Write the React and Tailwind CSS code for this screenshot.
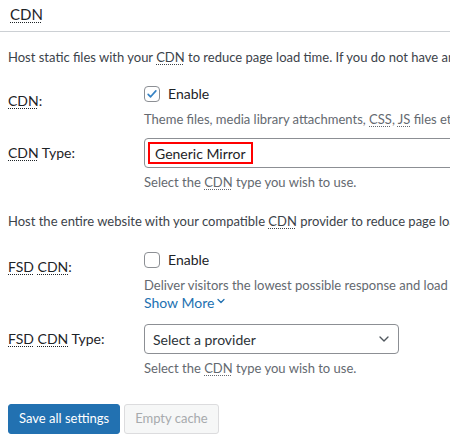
import { ChevronDown } from "lucide-react";

function Abbr({ children }) {
  return (
    <abbr title={children} className="underline decoration-dotted decoration-1 underline-offset-2">
      {children}
    </abbr>
  );
}

function Checkbox({ checked }) {
  return (
    <span className="w-[16px] h-[16px] rounded-[4px] border border-[#8c8f94] bg-white flex items-center justify-center shrink-0">
      {checked && (
        <svg viewBox="0 0 20 20" className="w-[16px] h-[16px]">
          <path d="M4.5 10.5l3.5 3.5 7.5-8.5" fill="none" stroke="#3582c4" strokeWidth="2.4" strokeLinecap="round" strokeLinejoin="round" />
        </svg>
      )}
    </span>
  );
}

export default function App() {
  return (
    <div
      className="w-[450px] h-[445px] overflow-hidden bg-white text-[14px] text-[#3c434a] whitespace-nowrap"
      style={{ fontFamily: 'Lato, "Liberation Sans", sans-serif' }}
    >
      {/* heading */}
      <div className="h-[32px] border-b border-[#ccd0d4] pl-[10px] pt-[4px]">
        <h3 className="text-[15px] text-[#1d2327] leading-[20px]">
          <Abbr>CDN</Abbr>
        </h3>
      </div>

      <p className="pl-[8px] mt-[15px] leading-[20px] text-[13px]">
        Host static files with your <Abbr>CDN</Abbr> to reduce page load time. If you do not have an account yet
      </p>

      {/* CDN */}
      <div className="flex mt-[19px]">
        <div className="w-[144px] pl-[8px] pt-[5px] text-[#1d2327] leading-[20px] shrink-0">
          <Abbr>CDN</Abbr>:
        </div>
        <div className="flex flex-col">
          <label className="flex items-center gap-[8px] leading-[20px] h-[16px]">
            <Checkbox checked />
            <span className="text-[#1d2327]">Enable</span>
          </label>
          <div className="text-[#646970] text-[13px] leading-[20px] mt-[7px]">
            Theme files, media library attachments, <Abbr>CSS</Abbr>, <Abbr>JS</Abbr> files etc. will be hosted
          </div>
        </div>
      </div>

      {/* CDN Type */}
      <div className="flex mt-[9px]">
        <div className="w-[144px] pl-[8px] pt-[5px] text-[#1d2327] leading-[20px] shrink-0">
          <Abbr>CDN</Abbr> Type:
        </div>
        <div className="flex flex-col">
          <div className="w-[320px] h-[30px] border border-[#8c8f94] rounded-[4px] flex items-center pl-[3px]">
            <span className="border-2 border-[#ff0000] h-[22px] flex items-center px-[5px] text-[#1d2327]">
              Generic Mirror
            </span>
          </div>
          <div className="text-[#646970] text-[13px] leading-[20px] mt-[4px]">
            Select the <Abbr>CDN</Abbr> type you wish to use.
          </div>
        </div>
      </div>

      <p className="pl-[8px] mt-[19px] leading-[20px] text-[13px]">
        Host the entire website with your compatible <Abbr>CDN</Abbr> provider to reduce page load time.
      </p>

      {/* FSD CDN */}
      <div className="flex mt-[21px]">
        <div className="w-[144px] pl-[8px] pt-[5px] text-[#1d2327] leading-[20px] shrink-0">
          <Abbr>FSD</Abbr> <Abbr>CDN</Abbr>:
        </div>
        <div className="flex flex-col">
          <label className="flex items-center gap-[8px] leading-[20px] h-[16px]">
            <Checkbox />
            <span className="text-[#1d2327]">Enable</span>
          </label>
          <div className="text-[#646970] text-[13px] leading-[20px] mt-[7px]">
            Deliver visitors the lowest possible response and load times
          </div>
          <a className="text-[#2271b1] leading-[16px] flex items-center">
            Show More
            <ChevronDown size={12} strokeWidth={2.5} className="ml-[1px] -mt-[4px]" />
          </a>
        </div>
      </div>

      {/* FSD CDN Type */}
      <div className="flex mt-[13px]">
        <div className="w-[144px] pl-[8px] pt-[5px] text-[#1d2327] leading-[20px] shrink-0">
          <Abbr>FSD</Abbr> <Abbr>CDN</Abbr> Type:
        </div>
        <div className="flex flex-col">
          <div className="w-[255px] h-[30px] border border-[#8c8f94] rounded-[4px] flex items-center justify-between pl-[8px] pr-[6px] text-[#2c3338]">
            <span>Select a provider</span>
            <ChevronDown size={16} strokeWidth={2} className="text-[#50575e]" />
          </div>
          <div className="text-[#646970] text-[13px] leading-[20px] mt-[4px]">
            Select the <Abbr>CDN</Abbr> type you wish to use.
          </div>
        </div>
      </div>

      {/* buttons */}
      <div className="flex gap-[4px] pl-[8px] mt-[26px]">
        <button className="h-[30px] px-[10px] rounded-[3px] bg-[#2271b1] border border-[#2271b1] text-white text-[13px]">
          Save all settings
        </button>
        <button className="h-[30px] px-[10px] rounded-[3px] bg-[#f6f7f7] border border-[#dcdcde] text-[#a7aaad] text-[13px]">
          Empty cache
        </button>
      </div>
    </div>
  );
}
